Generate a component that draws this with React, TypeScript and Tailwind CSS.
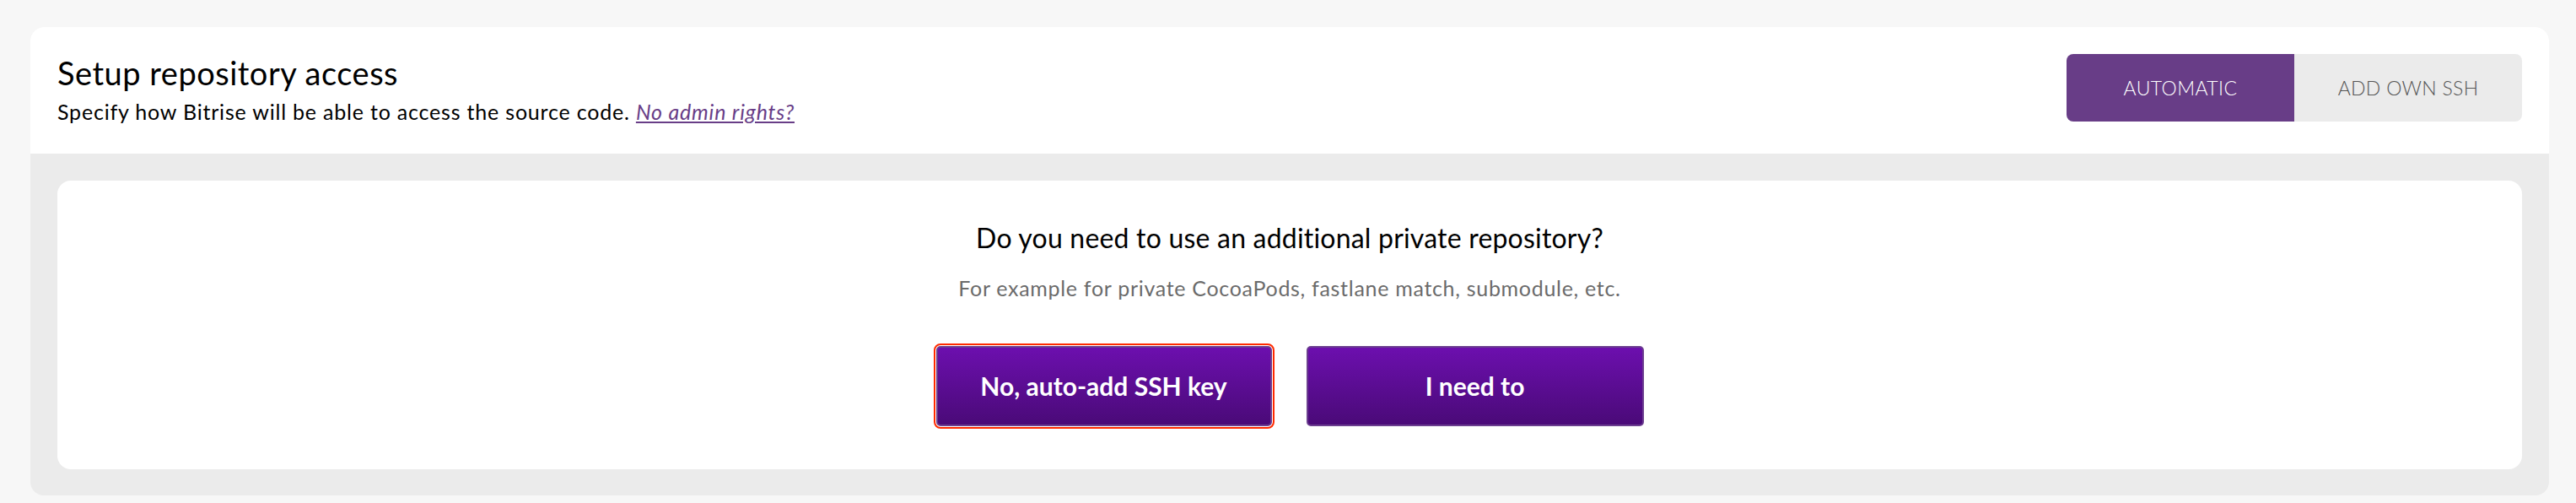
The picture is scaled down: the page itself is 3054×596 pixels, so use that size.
export default function App() {
  return (
    <div className="min-h-screen bg-[#f7f7f7] pt-[32px] pl-[36px] pr-[32px] pb-[9px] font-['Lato',sans-serif]">
      <div className="rounded-[16px] overflow-hidden bg-[#ebebeb]">
        <div className="bg-white h-[150px] flex justify-between items-start px-[32px] pt-[32px]">
          <div>
            <h1 className="text-[38px] leading-[44px] tracking-[0.5px] text-black">Setup repository access</h1>
            <p className="mt-[9px] text-[25px] leading-[30px] tracking-[0.8px] text-black">
              Specify how Bitrise will be able to access the source code.{' '}
              <a href="#" className="italic underline text-[#683d87]">No admin rights?</a>
            </p>
          </div>
          <div className="flex h-[80px] rounded-[8px] overflow-hidden">
            <button className="w-[270px] bg-[#683d87] text-white text-[23px] font-light tracking-[0.4px]">
              AUTOMATIC
            </button>
            <button className="w-[270px] bg-[#ebebeb] text-[#555] text-[23px] font-light tracking-[0.3px]">
              ADD OWN SSH
            </button>
          </div>
        </div>
        <div className="p-[32px] pb-[31px]">
          <div className="bg-white rounded-[16px] h-[342px] flex flex-col items-center pt-[48px]">
            <h2 className="text-[32px] leading-[40px] tracking-[0.2px] text-black">
              Do you need to use an additional private repository?
            </h2>
            <p className="mt-[23px] text-[25px] leading-[32px] tracking-[0.7px] text-[#6b6b6b]">
              For example for private CocoaPods, fastlane match, submodule, etc.
            </p>
            <div className="flex gap-[41px] mt-[53px]">
              <button className="w-[398px] h-[95px] rounded-[5px] border-2 border-[#6b3d8f] bg-gradient-to-b from-[#6c0fae] to-[#4a0a78] text-white text-[30px] font-bold outline-2 outline-[#ff2a00] outline-offset-1">
                No, auto-add SSH key
              </button>
              <button className="w-[400px] h-[95px] rounded-[5px] border-2 border-[#6b3d8f] bg-gradient-to-b from-[#6c0fae] to-[#4a0a78] text-white text-[30px] font-bold">
                I need to
              </button>
            </div>
          </div>
        </div>
      </div>
    </div>
  )
}
